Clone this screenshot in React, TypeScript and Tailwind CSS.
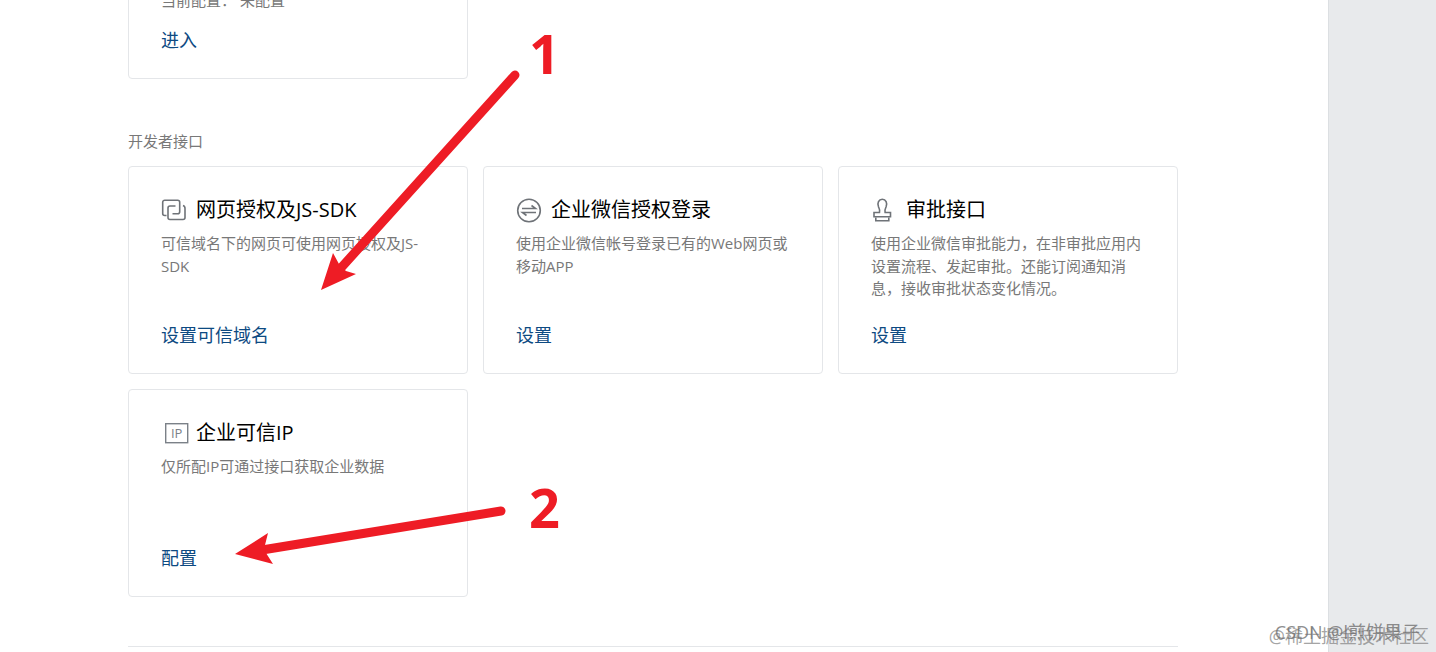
import type { ReactNode } from "react";

type CardProps = {
  icon: ReactNode;
  title: string;
  description: string;
  action: string;
};

const stroke = {
  fill: "none",
  stroke: "#6f7378",
  strokeWidth: 1.6,
};

function LinkedSquaresIcon() {
  return (
    <svg width="28" height="28" viewBox="0 0 28 28" aria-hidden="true" {...stroke}>
      <path d="M5.500 19.500H3.700a2 2 0 0 1-2-2V6.200a2 2 0 0 1 2-2h13a2 2 0 0 1 2 2v9.500a2 2 0 0 1-2 2H11.500" />
      <path d="M14.500 10H9a2 2 0 0 0-2 2v9.500a2 2 0 0 0 2 2h13a2 2 0 0 0 2-2V12.500a3 3 0 0 0-2-3" />
    </svg>
  );
}

function SwapIcon() {
  return (
    <svg width="28" height="28" viewBox="0 0 28 28" aria-hidden="true" {...stroke}>
      <circle cx="13" cy="14.500" r="11.300" />
      <path d="M6 12.500h13.500l-4-3M20 16.500H6.500l4 3" />
    </svg>
  );
}

function StampIcon() {
  return (
    <svg width="28" height="28" viewBox="0 0 28 28" aria-hidden="true" {...stroke}>
      <path d="M8.500 16.500c.7-2.500-.2-4-1-5.700C6 7 7.700 3.300 11.300 3.300s5.300 3.700 3.800 7.500c-.8 1.700-1.700 3.200-1 5.700h5.400v4.200H3v-4.200z" />
      <path d="M4.800 21.500v3.300h13v-3.300" />
    </svg>
  );
}

function IpIcon() {
  return (
    <svg width="28" height="28" viewBox="0 0 28 28" aria-hidden="true">
      <rect x="4.700" y="4.700" width="22" height="19" fill="none" stroke="#7b8188" strokeWidth="1.400" />
      <text x="15.700" y="19" textAnchor="middle" fontSize="13" fill="#7b8188">
        IP
      </text>
    </svg>
  );
}

function ActionLink({ children }: { children: ReactNode }) {
  return (
    <a href="#" className="self-start text-[18px] leading-6 text-[#0d4a82]">
      {children}
    </a>
  );
}

function Card({ icon, title, description, action }: CardProps) {
  return (
    <article className="flex min-h-52 flex-col rounded border border-[#e4e6e9] px-8 pt-7 pb-[26px]">
      <div className="flex items-center gap-[7px]">
        {icon}
        <h3 className="text-[20px] leading-[30px] text-black">{title}</h3>
      </div>
      <p className="mt-[7px] mb-auto text-[15px] leading-normal text-[#787878]">{description}</p>
      <ActionLink>{action}</ActionLink>
    </article>
  );
}

const cards: CardProps[] = [
  {
    icon: <LinkedSquaresIcon />,
    title: "网页授权及JS-SDK",
    description: "可信域名下的网页可使用网页授权及JS-SDK",
    action: "设置可信域名",
  },
  {
    icon: <SwapIcon />,
    title: "企业微信授权登录",
    description: "使用企业微信帐号登录已有的Web网页或移动APP",
    action: "设置",
  },
  {
    icon: <StampIcon />,
    title: "审批接口",
    description: "使用企业微信审批能力，在非审批应用内设置流程、发起审批。还能订阅通知消息，接收审批状态变化情况。",
    action: "设置",
  },
  {
    icon: <IpIcon />,
    title: "企业可信IP",
    description: "仅所配IP可通过接口获取企业数据",
    action: "配置",
  },
];

function Annotations() {
  return (
    <svg
      className="pointer-events-none absolute top-0 left-0"
      width="600"
      height="600"
      viewBox="0 0 600 600"
      fill="#ee1c25"
      role="img"
      aria-label="1, 2"
    >
      <g stroke="#ee1c25" strokeWidth="9" strokeLinecap="round">
        <path d="M515 75 340 269" />
        <path d="M501 511 262 550" />
      </g>
      <path d="M321 290 333 253 339 264 346 271 356 274z" />
      <path d="M235 554 268 533 265 545 266 553 273 564z" />
      <text x="529" y="74" fontSize="54" fontWeight="700">
        1
      </text>
      <text x="529" y="528" fontSize="54" fontWeight="700">
        2
      </text>
    </svg>
  );
}

export default function App() {
  return (
    <div
      lang="zh-CN"
      className="relative flex min-h-screen overflow-hidden bg-[#e8eaec] font-['Open_Sans','Noto_Sans_CJK_SC',sans-serif]"
    >
      <main className="min-w-0 flex-1 border-r border-[#dcdfe2] bg-white pr-[150px] pl-32">
        <div className="-mt-[17px] grid grid-cols-3 gap-[15px]">
          <section className="flex flex-col rounded border border-[#e4e6e9] px-8 pt-1 pb-[26px]">
            <p className="mb-4 text-[15px] leading-6 whitespace-pre text-[#787878]">当前配置： 未配置</p>
            <ActionLink>进入</ActionLink>
          </section>
        </div>
        <h2 className="mt-[51px] text-[15px] leading-[22px] text-[#787878]">开发者接口</h2>
        <div className="mt-[14px] grid grid-cols-3 gap-[15px]">
          {cards.map((card) => (
            <Card key={card.title} {...card} />
          ))}
        </div>
        <hr className="mt-[49px] border-[#e4e6e9]" />
      </main>
      <aside className="w-[107px] shrink-0" />
      <Annotations />
      <div className="absolute right-[7px] bottom-1 text-[18px] leading-6 text-[#8c8c8c]/80">
        @稀土掘金技术社区
      </div>
      <div className="absolute right-4 bottom-2 text-[18px] leading-6 text-[#707070]/80">CSDN @l煎饼果子</div>
    </div>
  );
}
